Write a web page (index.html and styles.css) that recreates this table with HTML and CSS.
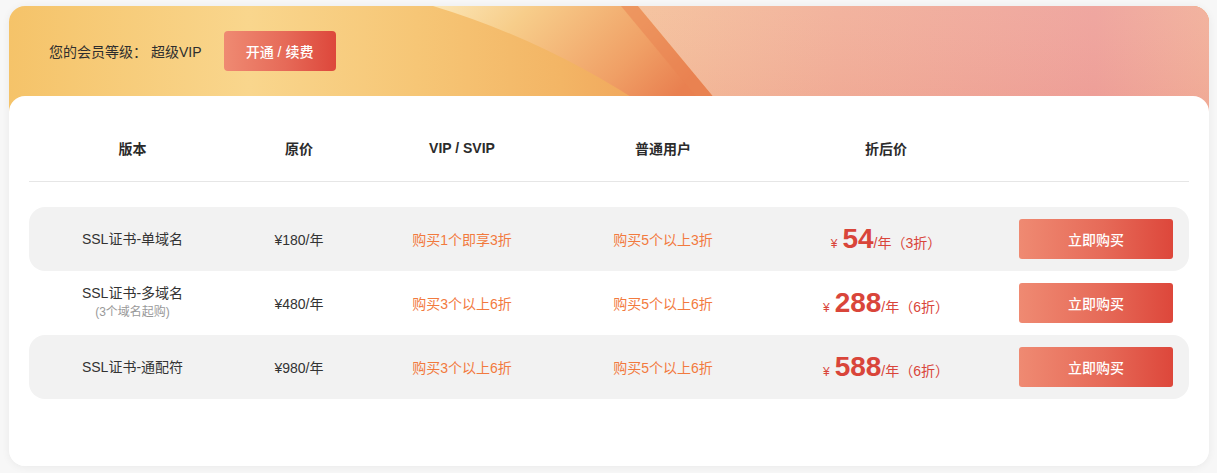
FILE: index.html
```html
<!DOCTYPE html>
<html lang="zh-CN">
<head>
<meta charset="utf-8">
<title>SSL证书</title>
<link rel="stylesheet" href="styles.css">
</head>
<body>
<div class="page">
  <div class="panel">
    <div class="banner">
      <svg class="banner-bg" viewBox="0 0 1200 106" preserveAspectRatio="none" aria-hidden="true">
        <defs>
          <linearGradient id="gL" x1="0" y1="0" x2="1" y2="0">
            <stop offset="0" stop-color="#f5c369"/>
            <stop offset="0.2" stop-color="#f9d68d"/>
            <stop offset="0.34" stop-color="#f6c676"/>
            <stop offset="0.46" stop-color="#f3b565"/>
            <stop offset="0.56" stop-color="#ef9f58"/>
            <stop offset="1" stop-color="#ef9f58"/>
          </linearGradient>
          <linearGradient id="gM" x1="0" y1="0" x2="1" y2="0.35">
            <stop offset="0" stop-color="#fbe6b6"/>
            <stop offset="0.3" stop-color="#f7cd8a"/>
            <stop offset="0.75" stop-color="#f0a066"/>
            <stop offset="1" stop-color="#e98050"/>
          </linearGradient>
          <linearGradient id="gR" x1="0" y1="0" x2="1" y2="0">
            <stop offset="0" stop-color="#f4bf98"/>
            <stop offset="0.35" stop-color="#f1ad96"/>
            <stop offset="0.8" stop-color="#ee9f98"/>
            <stop offset="1" stop-color="#f1ad97"/>
          </linearGradient>
          <linearGradient id="gShade" x1="0" y1="0" x2="0" y2="1">
            <stop offset="0" stop-color="#ffffff" stop-opacity="0.08"/>
            <stop offset="1" stop-color="#e88a80" stop-opacity="0.12"/>
          </linearGradient>
        </defs>
        <rect x="0" y="0" width="1200" height="106" fill="url(#gL)"/>
        <path d="M424 0 Q540 35 645 106 L717 106 L629 0 Z" fill="url(#gM)"/>
        <path d="M612 0 L629 0 L717 106 L700 106 Z" fill="#ea8452" opacity="0.55"/>
        <path d="M629 0 L1200 0 L1200 106 L717 106 Z" fill="url(#gR)"/>
        <path d="M629 0 L1200 0 L1200 106 L717 106 Z" fill="url(#gShade)"/>
      </svg>
      <div class="member">
        <span class="member-label">您的会员等级：</span>
        <span class="member-level">超级VIP</span>
        <button class="btn btn-renew">开通 / 续费</button>
      </div>
    </div>
    <div class="card">
      <div class="grid head">
        <div class="cell">版本</div>
        <div class="cell">原价</div>
        <div class="cell">VIP / SVIP</div>
        <div class="cell">普通用户</div>
        <div class="cell">折后价</div>
        <div class="cell"></div>
      </div>
      <div class="rows">
        <div class="grid row alt">
          <div class="cell name">SSL证书-单域名</div>
          <div class="cell">¥180/年</div>
          <div class="cell offer">购买1个即享3折</div>
          <div class="cell offer">购买5个以上3折</div>
          <div class="cell price"><span class="yen">¥</span><span class="num">54</span><span class="unit">/年（3折）</span></div>
          <div class="cell action"><button class="btn btn-buy">立即购买</button></div>
        </div>
        <div class="grid row">
          <div class="cell name"><div>SSL证书-多域名</div><div class="sub">(3个域名起购)</div></div>
          <div class="cell">¥480/年</div>
          <div class="cell offer">购买3个以上6折</div>
          <div class="cell offer">购买5个以上6折</div>
          <div class="cell price"><span class="yen">¥</span><span class="num">288</span><span class="unit">/年（6折）</span></div>
          <div class="cell action"><button class="btn btn-buy">立即购买</button></div>
        </div>
        <div class="grid row alt">
          <div class="cell name">SSL证书-通配符</div>
          <div class="cell">¥980/年</div>
          <div class="cell offer">购买3个以上6折</div>
          <div class="cell offer">购买5个以上6折</div>
          <div class="cell price"><span class="yen">¥</span><span class="num">588</span><span class="unit">/年（6折）</span></div>
          <div class="cell action"><button class="btn btn-buy">立即购买</button></div>
        </div>
      </div>
    </div>
  </div>
</div>
</body>
</html>
```

FILE: styles.css
```css
* { box-sizing: border-box; }
html, body { margin: 0; padding: 0; }
body {
  background: #f7f7f7;
  font-family: "Liberation Sans", "Noto Sans CJK SC", sans-serif;
  color: #333;
  font-size: 14px;
}
.page {
  padding: 6px 8px 7px 9px;
}
.panel {
  width: 1200px;
  border-radius: 16px;
  box-shadow: 0 1px 8px rgba(0, 0, 0, 0.06);
}
.banner {
  position: relative;
  height: 106px;
  border-radius: 16px 16px 0 0;
  overflow: hidden;
}
.banner-bg {
  position: absolute;
  left: 0;
  top: 0;
  width: 100%;
  height: 100%;
  display: block;
}
.member {
  position: relative;
  height: 90px;
  display: flex;
  align-items: center;
  padding-left: 40px;
}
.member-label { color: #2e2e2e; }
.member-level { margin-left: 4px; color: #2e2e2e; }
.btn {
  border: none;
  font-family: inherit;
  color: #fff;
  font-size: 14px;
  cursor: pointer;
  background: linear-gradient(90deg, #ef8a72 0%, #e66a58 55%, #dd473b 100%);
}
.btn-renew {
  margin-left: 22px;
  width: 112px;
  height: 40px;
  border-radius: 4px;
  font-weight: 500;
}
.card {
  position: relative;
  margin-top: -16px;
  background: #fff;
  border-radius: 16px;
  padding: 0 20px 67px;
}
.grid {
  display: grid;
  grid-template-columns: 207px 126px 200px 202px 244px 1fr;
  align-items: center;
}
.cell {
  text-align: center;
  white-space: nowrap;
}
.head {
  height: 86px;
  padding-top: 19px;
  border-bottom: 1px solid #e6e6e6;
  font-weight: bold;
  color: #2b2b2b;
}
.rows {
  padding-top: 25px;
}
.row {
  height: 64px;
  border-radius: 16px;
}
.row.alt {
  background: #f2f2f2;
}
.name { line-height: 19px; }
.sub {
  font-size: 12px;
  color: #999;
}
.offer { color: #f27a3e; }
.price {
  color: #d9453a;
  display: flex;
  align-items: baseline;
  justify-content: center;
}
.yen {
  font-size: 12px;
  margin-right: 5px;
}
.num {
  font-size: 28px;
  font-weight: bold;
  line-height: 1;
}
.unit {
  font-size: 14px;
}
.action {
  display: flex;
  justify-content: flex-end;
  padding-right: 16px;
}
.btn-buy {
  width: 154px;
  height: 40px;
  border-radius: 3px;
  font-weight: 500;
}
```
